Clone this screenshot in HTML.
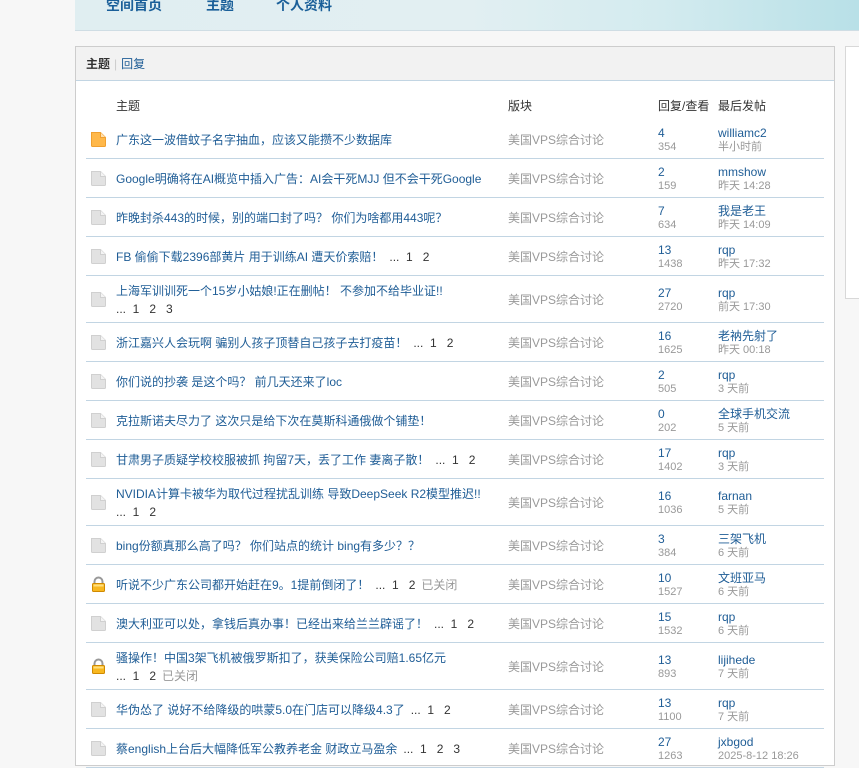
<!DOCTYPE html>
<html><head><meta charset="utf-8"><style>
*{margin:0;padding:0;box-sizing:border-box}
body{width:859px;height:759px;overflow:hidden;background:#f7f7f7;font:12px "Liberation Sans","Noto Sans CJK SC",sans-serif;color:#333;position:relative}
.hd{position:absolute;left:75px;top:0;width:784px;height:31px;border-bottom:1px solid #cfdde4;background:linear-gradient(90deg,#e0eef1 0%,#e2eff2 50%,#d3ebef 75%,#b8e0e7 100%)}
.hd a{position:absolute;top:-5px;font-size:14px;font-weight:bold;color:#1a5f99;text-decoration:none}
.box{position:absolute;left:75px;top:46px;width:760px;height:720px;border:1px solid #cdcdcd;background:#fff}
.tb{height:34px;background:#f2f2f2;border-bottom:1px solid #c2d5e3;padding:8px 0 0 10px;font-size:12px}
.tb b{color:#333}.tb span{color:#ccc;margin:0 4px}.tb a{color:#1f5d96}
.rb{position:absolute;left:845px;top:46px;width:20px;height:253px;border:1px solid #d8d8d8;background:#fff}
.th{position:absolute;top:97px;font-size:12px;color:#333}
.row{position:absolute;left:86px;width:738px;border-bottom:1px solid #c2d5e3}
.ic{position:absolute;left:4px;width:17px;height:17px}
.t{position:absolute;left:30px;color:#1f5d96;line-height:18px;white-space:nowrap}
.t i{font-style:normal;color:#333;margin-left:6px}
.t u{text-decoration:none;color:#999;margin-left:6px}
.f{position:absolute;left:422px;color:#999}
.n{position:absolute;left:572px;line-height:14px}
.n b{font-weight:normal;color:#1f5d96;display:block;font-size:12px}
.n s{text-decoration:none;color:#999;font-size:11px;display:block}
.l{position:absolute;left:632px;line-height:14px}
.l b{font-weight:normal;color:#1f5d96;display:block}
.l s{text-decoration:none;color:#999;font-size:11px;display:block}
</style></head><body>
<div class="hd"><a style="left:31px">空间首页</a><a style="left:131px">主题</a><a style="left:201px">个人资料</a></div>
<div class="rb"></div>
<div class="box"><div class="tb"><b>主题</b><span>|</span><a>回复</a></div></div>
<div class="th" style="left:116px">主题</div>
<div class="th" style="left:508px">版块</div>
<div class="th" style="left:658px">回复/查看</div>
<div class="th" style="left:718px">最后发帖</div>
<svg width="0" height="0" style="position:absolute"><defs>
<symbol id="d" viewBox="0 0 17 17"><path d="M1.5 1.5h9l5 5v8a1 1 0 0 1-1 1h-12a1 1 0 0 1-1-1z" fill="#e2e2e2" stroke="#d0d0d0"/><path d="M10.5 1.5v5h5" fill="#f4f4f4" stroke="#d0d0d0"/></symbol>
<symbol id="o" viewBox="0 0 17 17"><path d="M1.5 1.5h9l5 5v8a1 1 0 0 1-1 1h-12a1 1 0 0 1-1-1z" fill="#ffb84a" stroke="#f0a030"/><path d="M10.5 1.5v5h5" fill="#ffe0b0" stroke="#f0a030"/></symbol>
<symbol id="k" viewBox="0 0 17 17"><path d="M4.5 8V5.5a4 4 0 0 1 8 0V8" fill="none" stroke="#999" stroke-width="2"/><rect x="2.5" y="7.5" width="12" height="8" rx="1" fill="#f8b820" stroke="#d08a00"/><rect x="3.5" y="8.5" width="10" height="2" fill="#ffe080"/></symbol>
</defs></svg>
<div id="rows"></div>
<script>
var R=[
["o","广东这一波借蚊子名字抽血，应该又能攒不少数据库","","4","354","williamc2","半小时前"],
["d","Google明确将在AI概览中插入广告：AI会干死MJJ 但不会干死Google","","2","159","mmshow","昨天 14:28"],
["d","昨晚封杀443的时候，别的端口封了吗？ 你们为啥都用443呢？","","7","634","我是老王","昨天 14:09"],
["d","FB 偷偷下载2396部黄片 用于训练AI 遭天价索赔！<i>... &nbsp;1 &nbsp; 2</i>","","13","1438","rqp","昨天 17:32"],
["d","上海军训训死一个15岁小姑娘!正在删帖！ 不参加不给毕业证!!","2","27","2720","rqp","前天 17:30"],
["d","浙江嘉兴人会玩啊 骗别人孩子顶替自己孩子去打疫苗！<i>... &nbsp;1 &nbsp; 2</i>","","16","1625","老衲先射了","昨天 00:18"],
["d","你们说的抄袭 是这个吗？ 前几天还来了loc","","2","505","rqp","3 天前"],
["d","克拉斯诺夫尽力了 这次只是给下次在莫斯科通俄做个铺垫！","","0","202","全球手机交流","5 天前"],
["d","甘肃男子质疑学校校服被抓 拘留7天，丢了工作 妻离子散！<i>... &nbsp;1 &nbsp; 2</i>","","17","1402","rqp","3 天前"],
["d","NVIDIA计算卡被华为取代过程扰乱训练 导致DeepSeek R2模型推迟!!","2b","16","1036","farnan","5 天前"],
["d","bing份额真那么高了吗？ 你们站点的统计 bing有多少？？","","3","384","三架飞机","6 天前"],
["k","听说不少广东公司都开始赶在9。1提前倒闭了！<i>... &nbsp;1 &nbsp; 2</i><u>已关闭</u>","","10","1527","文班亚马","6 天前"],
["d","澳大利亚可以处，拿钱后真办事！已经出来给兰兰辟谣了！<i>... &nbsp;1 &nbsp; 2</i>","","15","1532","rqp","6 天前"],
["k","骚操作！中国3架飞机被俄罗斯扣了，获美保险公司赔1.65亿元","2c","13","893","lijihede","7 天前"],
["d","华伪怂了 说好不给降级的哄蒙5.0在门店可以降级4.3了<i>... &nbsp;1 &nbsp; 2</i>","","13","1100","rqp","7 天前"],
["d","蔡english上台后大幅降低军公教养老金 财政立马盈余<i>... &nbsp;1 &nbsp; 2 &nbsp; 3</i>","","27","1263","jxbgod","2025-8-12 18:26"]];
var y=120,h="";
R.forEach(function(r){var dbl=r[2]!="";var H=dbl?47:39;
var t=r[1];if(r[2]=="2")t+='<br><i style="margin:0">... &nbsp;1 &nbsp; 2 &nbsp; 3</i>';if(r[2]=="2b")t+='<br><i style="margin:0">... &nbsp;1 &nbsp; 2</i>';if(r[2]=="2c")t+='<br><i style="margin:0">... &nbsp;1 &nbsp; 2</i><u>已关闭</u>';
h+='<div class="row" style="top:'+y+'px;height:'+H+'px">'+
'<svg class="ic" style="top:'+(H/2-9)+'px"><use href="#'+r[0]+'"/></svg>'+
'<div class="t" style="top:'+(dbl?(H/2-18):(H/2-9))+'px">'+t+'</div>'+
'<div class="f" style="top:'+(H/2-9)+'px">美国VPS综合讨论</div>'+
'<div class="n" style="top:'+(H/2-14)+'px"><b>'+r[3]+'</b><s>'+r[4]+'</s></div>'+
'<div class="l" style="top:'+(H/2-14)+'px"><b>'+r[5]+'</b><s>'+r[6]+'</s></div></div>';
y+=H;});
document.getElementById("rows").innerHTML=h;
</script>
</body></html>
